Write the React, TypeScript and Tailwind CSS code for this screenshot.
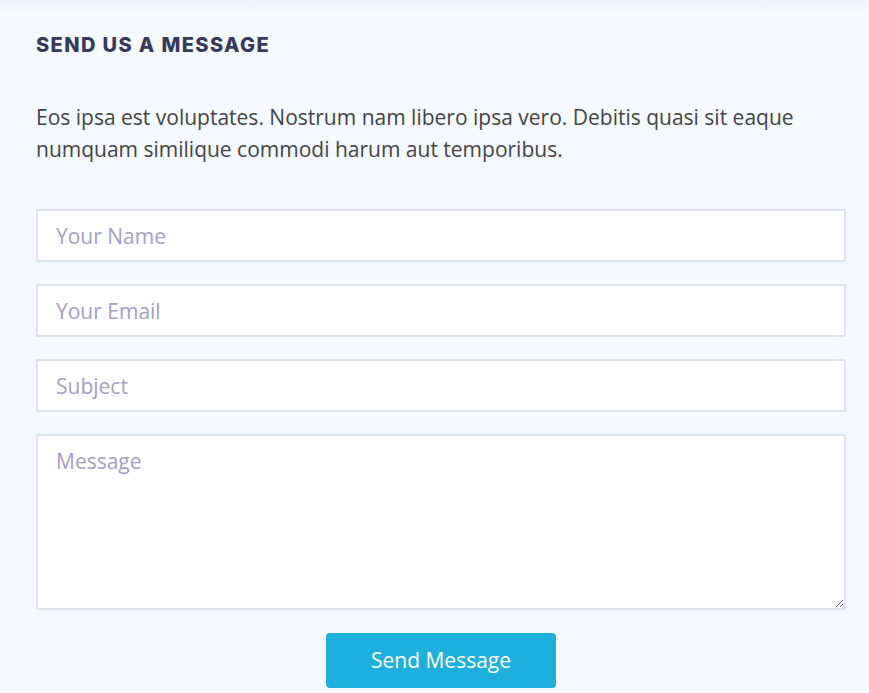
import React from "react";

export default function App() {
  const inputCls =
    "w-full h-[53px] bg-white border-2 border-[#dfe3ee] px-[18px] text-[21px] text-[#444] placeholder:text-[#a4a0c0] outline-none";
  return (
    <div
      className="min-h-[693px] w-[869px] bg-[#f5f8fd] bg-gradient-to-b from-[#f0f3f9] to-[#f5f8fd] bg-no-repeat bg-[length:100%_12px] pl-[36px] pr-[23px] pt-[32px]"
      style={{ fontFamily: '"Open Sans", sans-serif' }}
    >
      <h2
        className="text-[20px] font-extrabold text-[#36395a] tracking-[1.4px] leading-[26px]"
        style={{ fontFamily: 'Inter, "Open Sans", sans-serif' }}
      >
        SEND US A MESSAGE
      </h2>
      <p className="mt-[43px] text-[21px] leading-[32px] text-[#444444]">
        Eos ipsa est voluptates. Nostrum nam libero ipsa vero. Debitis quasi sit eaque numquam similique commodi harum aut temporibus.
      </p>
      <form className="mt-[44px] flex flex-col gap-[22px]">
        <input className={inputCls} placeholder="Your Name" />
        <input className={inputCls} placeholder="Your Email" />
        <input className={inputCls} placeholder="Subject" />
        <textarea
          className="w-full h-[176px] bg-white border-2 border-[#dfe3ee] px-[18px] py-[10px] text-[21px] text-[#444] placeholder:text-[#a4a0c0] outline-none block"
          placeholder="Message"
        />
      </form>
      <div className="flex justify-center mt-[23px]">
        <button className="w-[230px] h-[55px] rounded-[4px] bg-[#1eb0dc] text-white text-[21px]">
          Send Message
        </button>
      </div>
    </div>
  );
}
